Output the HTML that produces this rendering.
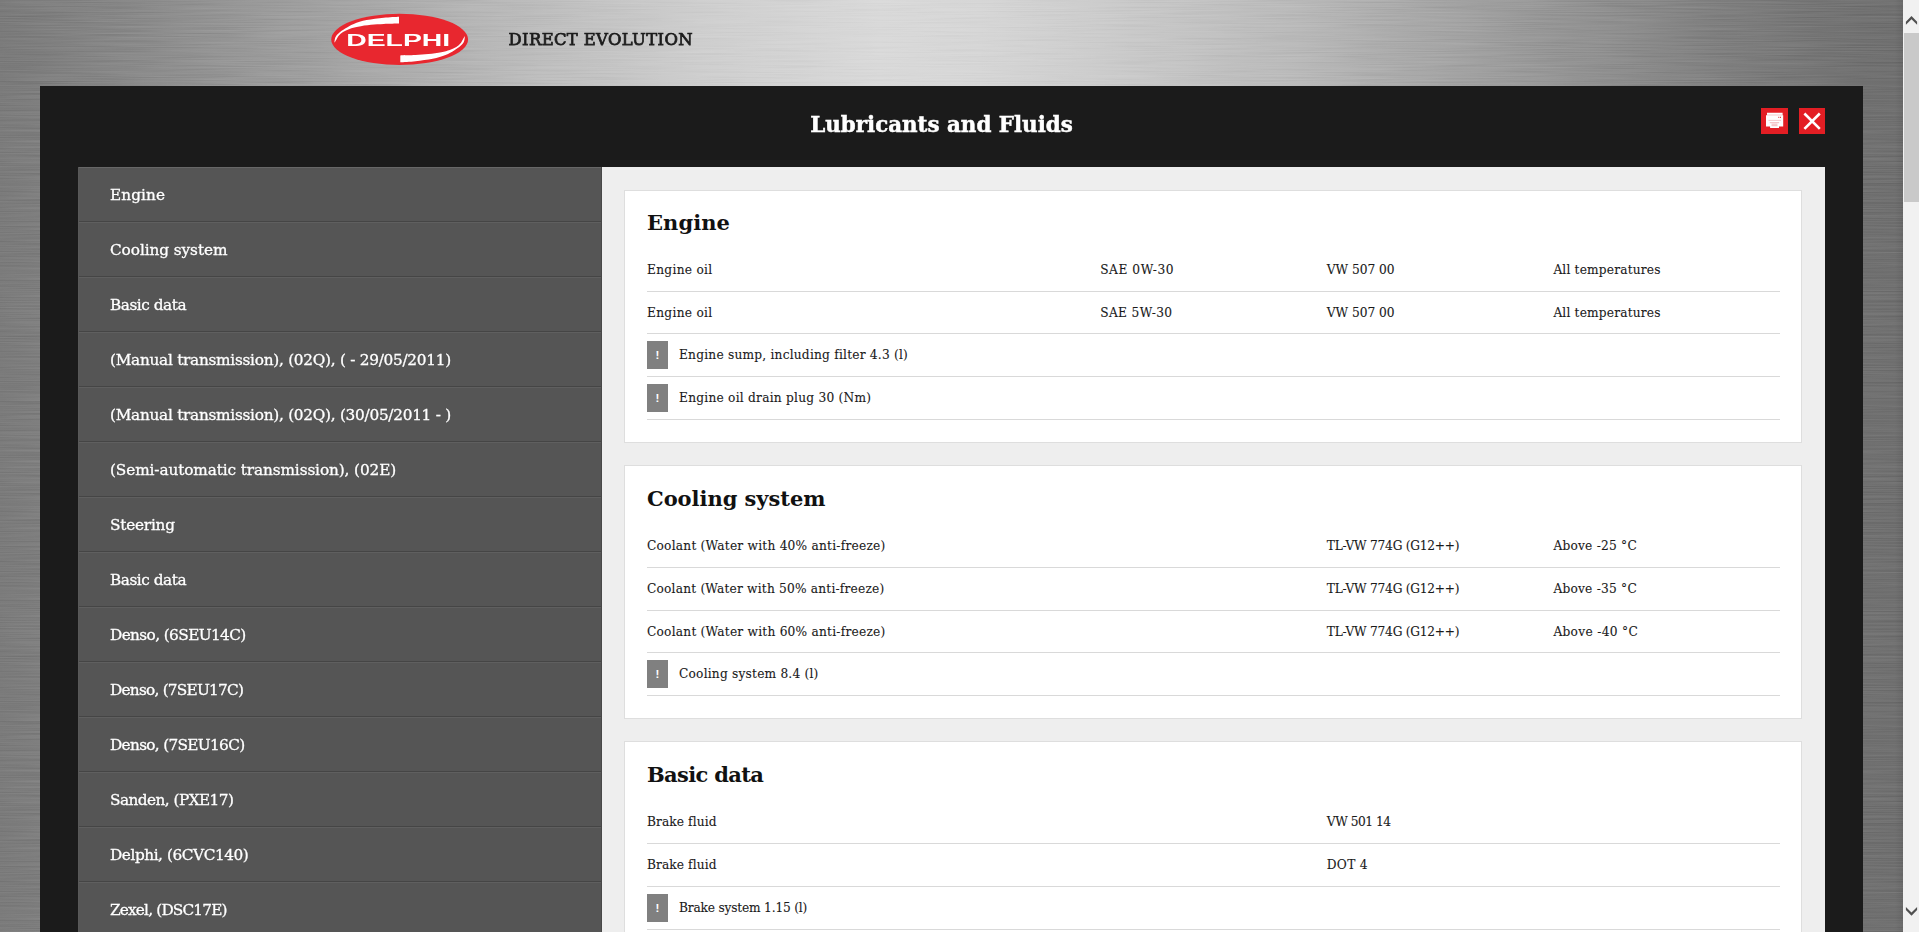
<!DOCTYPE html>
<html lang="en">
<head>
<meta charset="utf-8">
<title>Lubricants and Fluids</title>
<style>
*{box-sizing:border-box;margin:0;padding:0}
html,body{width:1919px;height:932px;overflow:hidden}
body{position:relative;font-family:"DejaVu Serif","Liberation Serif",serif;color:#1a1a1a;
background:#9a9a9a;}
#bg{position:absolute;left:0;top:0;width:1903px;height:932px;
background:
 linear-gradient(90deg,#7b7b7b 0,#7e7e7e 40px,#8e8e8e 170px,#9f9f9f 300px,#b9b9b9 500px,#cecece 700px,#d9d9d9 880px,#d6d6d6 980px,#cccccc 1100px,#b9b9b9 1300px,#a4a4a4 1450px,#909090 1600px,#7c7c7c 1750px,#717171 1863px,#707070 1895px,#686868 1903px);}
#logo{position:absolute;left:325px;top:8px;width:150px;height:64px}
#brand{-webkit-text-stroke:.75px #1c1c1c;position:absolute;left:508.6px;top:29.3px;font-size:16.4px;line-height:22px;color:#1c1c1c;white-space:nowrap;letter-spacing:.36px}
#panel{position:absolute;left:40px;top:86px;width:1823px;height:846px;background:#1b1b1b}
#title{-webkit-text-stroke:.5px #fff;position:absolute;left:0;top:23px;width:1803px;text-align:center;color:#fff;font-weight:700;font-size:21.4px;line-height:32px}
.btn{position:absolute;top:22px;width:26px;height:26px;background:#e31e24}
#side{position:absolute;left:38px;top:81px;width:524px;height:765px;background:#555;overflow:hidden;border-right:1px solid #484848;border-left:1px solid #585858}
#side div:first-child{border-top-color:#676767}
#side div{-webkit-text-stroke:.3px #fff;height:55px;border-bottom:1px solid #454545;border-top:1px solid #5f5f5f;color:#fff;font-size:15.3px;line-height:54px;padding-left:31px;white-space:nowrap}
#main{position:absolute;left:562px;top:81px;width:1223px;height:765px;background:#eee;overflow:hidden}
.card{position:absolute;left:22px;width:1178px;background:#fff;border:1px solid #dedede;padding:22px}
.card h2{font-size:21px;line-height:30px;font-weight:700;color:#111;height:41px;margin-top:-5px}
.r{display:flex;align-items:center;height:43px;border-bottom:1px solid #d9d9d9;font-size:12.2px;-webkit-text-stroke:.1px #1a1a1a;white-space:nowrap;width:1133px}
.r.s{height:42px}
.r span.a{width:453.2px}.r span.b{width:226.6px}.r span.c{width:226.6px}
.ex{display:block;flex:none;width:21px;height:28.4px;background:#808080;color:#fff;text-align:center;line-height:29.5px;font-size:11.5px;-webkit-text-stroke:0;font-weight:700;font-family:"Liberation Sans",sans-serif;margin-right:11px;position:relative;top:-.3px}
#sb{position:absolute;left:1903px;top:0;width:16px;height:932px;background:#f1f1f1}
#sb i{position:absolute;left:1px;top:33px;width:15px;height:169px;background:#c9c9c9}
</style>
</head>
<body>
<div id="bg"></div>
<svg id="tex" width="1903" height="932" viewBox="0 0 1903 932" style="position:absolute;left:0;top:0;mix-blend-mode:soft-light"><filter id="brush" x="0" y="0" width="100%" height="100%" color-interpolation-filters="sRGB"><feTurbulence type="fractalNoise" baseFrequency="0.012 0.8" numOctaves="2" seed="7" result="n"/><feColorMatrix type="matrix" values=".22 0 0 0 .39  .22 0 0 0 .39  .22 0 0 0 .39  0 0 0 0 1"/></filter><rect width="1903" height="932" filter="url(#brush)"/></svg>
<svg id="logo" viewBox="0 0 150 64">
<ellipse cx="74.65" cy="31.45" rx="68.4" ry="25.6" fill="#e8272f"/>
<path id="sw" d="M74 8.65C71.47 8.82 64.20 9.12 58.80 9.70C53.40 10.27 46.61 11.07 41.60 12.10C36.59 13.13 32.32 14.50 28.75 15.90C25.18 17.30 22.71 18.95 20.20 20.50C17.69 22.05 15.35 23.70 13.70 25.20C12.05 26.70 11.02 27.90 10.30 29.50C9.58 31.10 9.55 33.92 9.40 34.80C9.70 34.33 10.48 33.17 11.20 32.00C11.92 30.82 12.57 29.10 13.70 27.75C14.83 26.40 16.20 25.04 18.00 23.90C19.80 22.76 22.00 21.77 24.50 20.90C27.00 20.03 29.43 19.38 33.00 18.70C36.57 18.02 41.60 17.27 45.90 16.80C50.20 16.33 54.12 16.12 58.80 15.90C63.48 15.68 71.47 15.57 74.00 15.50Z" fill="#fff"/>
<path d="M74 8.65C71.47 8.82 64.20 9.12 58.80 9.70C53.40 10.27 46.61 11.07 41.60 12.10C36.59 13.13 32.32 14.50 28.75 15.90C25.18 17.30 22.71 18.95 20.20 20.50C17.69 22.05 15.35 23.70 13.70 25.20C12.05 26.70 11.02 27.90 10.30 29.50C9.58 31.10 9.55 33.92 9.40 34.80C9.70 34.33 10.48 33.17 11.20 32.00C11.92 30.82 12.57 29.10 13.70 27.75C14.83 26.40 16.20 25.04 18.00 23.90C19.80 22.76 22.00 21.77 24.50 20.90C27.00 20.03 29.43 19.38 33.00 18.70C36.57 18.02 41.60 17.27 45.90 16.80C50.20 16.33 54.12 16.12 58.80 15.90C63.48 15.68 71.47 15.57 74.00 15.50Z" fill="#fff" transform="rotate(180 74.65 31.45)"/>
<text x="0" y="0" transform="translate(21.2,37.7) scale(1.67,1)" font-family="Liberation Sans, sans-serif" font-weight="700" font-size="17" fill="#fff">DELPHI</text>
</svg>
<div id="brand">DIRECT EVOLUTION</div>
<div id="panel">
 <div id="title">Lubricants and Fluids</div>
 <div class="btn" style="left:1721px;width:27px"><svg width="27" height="26" viewBox="0 0 27 26"><path d="M6 4.800h15.600v2.400h.600v11.300h-4.200v1.600H9.100v-1.600H5V7.200h1z" fill="#fff"/><path d="M6 7h15.600M7.500 12.400h12.500" stroke="#f0a6a9" stroke-width=".6"/><path d="M17.300 9.400h1M19 9.400h1" stroke="#e5474d" stroke-width="1.100"/><path d="M8.800 14.700h9.400M10.500 16.200h6M10.500 17.700h6" stroke="#ef9a9d" stroke-width=".7"/></svg></div>
 <div class="btn" style="left:1759px"><svg width="26" height="26" viewBox="0 0 26 26"><path d="M5.400 5.500l15.400 15.400M20.800 5.500L5.400 20.900" stroke="#fff" stroke-width="2.600"/></svg></div>
 <div id="side">
  <div><span class="t" style="letter-spacing:0.08px">Engine</span></div><div><span class="t" style="letter-spacing:-0.08px">Cooling system</span></div><div><span class="t" style="letter-spacing:-0.46px">Basic data</span></div><div><span class="t" style="letter-spacing:-0.27px">(Manual transmission), (02Q), ( - 29/05/2011)</span></div><div><span class="t" style="letter-spacing:-0.27px">(Manual transmission), (02Q), (30/05/2011 - )</span></div><div><span class="t" style="letter-spacing:-0.11px">(Semi-automatic transmission), (02E)</span></div><div><span class="t" style="letter-spacing:-0.22px">Steering</span></div><div><span class="t" style="letter-spacing:-0.46px">Basic data</span></div><div><span class="t" style="letter-spacing:-0.6px">Denso, (6SEU14C)</span></div><div><span class="t" style="letter-spacing:-0.76px">Denso, (7SEU17C)</span></div><div><span class="t" style="letter-spacing:-0.68px">Denso, (7SEU16C)</span></div><div><span class="t" style="letter-spacing:-0.55px">Sanden, (PXE17)</span></div><div><span class="t" style="letter-spacing:-0.44px">Delphi, (6CVC140)</span></div><div><span class="t" style="letter-spacing:-0.82px">Zexel, (DSC17E)</span></div>
 </div>
 <div id="main">
  <div class="card" style="top:23px;height:253px">
   <h2><span class="t" style="letter-spacing:0.08px">Engine</span></h2>
   
    <div class="r"><span class="a"><span class="t" style="letter-spacing:0.3px">Engine oil</span></span><span class="b"><span class="t" style="letter-spacing:0.56px">SAE 0W-30</span></span><span class="c"><span class="t" style="letter-spacing:-0.02px">VW 507 00</span></span><span><span class="t" style="letter-spacing:0.19px">All temperatures</span></span></div>
    <div class="r s"><span class="a"><span class="t" style="letter-spacing:0.3px">Engine oil</span></span><span class="b"><span class="t" style="letter-spacing:0.37px">SAE 5W-30</span></span><span class="c"><span class="t" style="letter-spacing:-0.02px">VW 507 00</span></span><span><span class="t" style="letter-spacing:0.19px">All temperatures</span></span></div>
    <div class="r"><span class="ex">!</span><span class="t" style="letter-spacing:0.22px">Engine sump, including filter 4.3 (l)</span></div>
    <div class="r"><span class="ex">!</span><span class="t" style="letter-spacing:0.24px">Engine oil drain plug 30 (Nm)</span></div>
   
  </div>
  <div class="card" style="top:298px;height:254px;padding-top:23px">
   <h2><span class="t" style="letter-spacing:-0.05px">Cooling system</span></h2>
   
    <div class="r"><span class="a"><span class="t" style="letter-spacing:0.23px">Coolant (Water with 40% anti-freeze)</span></span><span class="b"></span><span class="c"><span class="t" style="letter-spacing:-0.23px">TL-VW 774G (G12++)</span></span><span><span class="t" style="letter-spacing:0.23px">Above -25 °C</span></span></div>
    <div class="r"><span class="a"><span class="t" style="letter-spacing:0.2px">Coolant (Water with 50% anti-freeze)</span></span><span class="b"></span><span class="c"><span class="t" style="letter-spacing:-0.23px">TL-VW 774G (G12++)</span></span><span><span class="t" style="letter-spacing:0.23px">Above -35 °C</span></span></div>
    <div class="r s"><span class="a"><span class="t" style="letter-spacing:0.23px">Coolant (Water with 60% anti-freeze)</span></span><span class="b"></span><span class="c"><span class="t" style="letter-spacing:-0.23px">TL-VW 774G (G12++)</span></span><span><span class="t" style="letter-spacing:0.32px">Above -40 °C</span></span></div>
    <div class="r"><span class="ex">!</span><span class="t" style="letter-spacing:0.21px">Cooling system 8.4 (l)</span></div>
   
  </div>
  <div class="card" style="top:574px;height:254px;padding-top:23px">
   <h2><span class="t" style="letter-spacing:-0.67px">Basic data</span></h2>
   
    <div class="r"><span class="a"><span class="t" style="letter-spacing:0.1px">Brake fluid</span></span><span class="b"></span><span class="c"><span class="t" style="letter-spacing:-0.45px">VW 501 14</span></span><span></span></div>
    <div class="r"><span class="a"><span class="t" style="letter-spacing:0.1px">Brake fluid</span></span><span class="b"></span><span class="c"><span class="t" style="letter-spacing:0.3px">DOT 4</span></span><span></span></div>
    <div class="r"><span class="ex">!</span><span class="t" style="letter-spacing:-0.18px">Brake system 1.15 (l)</span></div>
    <div class="r"></div>
   
  </div>
 </div>
</div>
<div id="sb"><i></i><svg style="position:absolute;left:0;top:0" width="16" height="932" viewBox="0 0 16 932"><path d="M2.900 21.700L8.500 16.100 14.100 21.700V24.800L8.500 19.200 2.900 24.800z" fill="#505050"/><path d="M2.900 910.100L8.500 915.700 14.100 910.100V907L8.500 912.600 2.900 907z" fill="#505050"/></svg></div>
</body>
</html>
